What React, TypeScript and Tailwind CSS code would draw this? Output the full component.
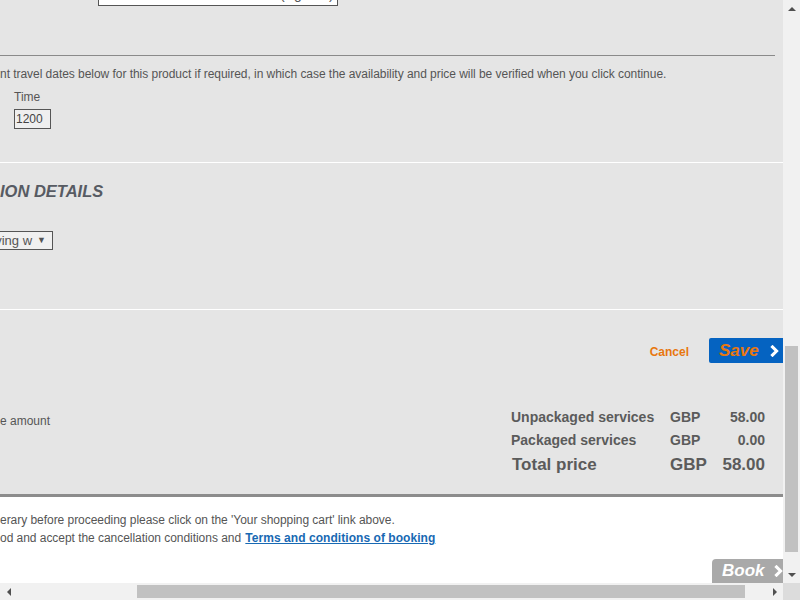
import React from "react";

const font = "font-['Liberation_Sans',Arial,sans-serif]";

function Chevron({ className }: { className?: string }) {
  return (
    <svg viewBox="0 0 10 14" className={className}>
      <path d="M2 1 L8 7 L2 13" fill="none" stroke="currentColor" strokeWidth="3.6" />
    </svg>
  );
}

function PriceRow({ label, amount, big }: { label: string; amount: string; big?: boolean }) {
  return (
    <div
      className={`grid grid-cols-[159px_50px_45px] items-center font-bold text-[#5b5b5b] ${
        big ? "text-[17px] h-[26px]" : "text-[14px] h-[23px]"
      }`}
    >
      <span className={big ? "pl-[1px]" : ""}>{label}</span>
      <span>GBP</span>
      <span className="text-right">{amount}</span>
    </div>
  );
}

export default function App() {
  return (
    <div className={`w-[800px] h-[600px] overflow-hidden flex flex-col ${font}`}>
      <div className="flex h-[583px]">
        {/* page content */}
        <div className="w-[783px] h-full overflow-hidden bg-[#e5e5e5] flex flex-col">
          <div className="h-[55px]">
            <div className="ml-[98px] -mt-[15px] w-[240px] h-[21px] border border-[#555] bg-white text-[14px] text-[#555] leading-[17px] pl-[6px] whitespace-nowrap overflow-hidden">
              Mr Loaded-Test Information (Age 20)
            </div>
          </div>
          <div className="h-px w-[775px] bg-[#8a8a8a]" />

          <div className="h-[106px] pt-[11px] text-[12px] text-[#555]">
            <p className="whitespace-nowrap leading-[14px] tracking-[-0.04px]">
              nt travel dates below for this product if required, in which case the availability and price will be
              verified when you click continue.
            </p>
            <p className="ml-[14px] mt-[9px] leading-[14px]">Time</p>
            <div className="ml-[14px] mt-[5px] w-[37px] h-[20px] border border-[#555] bg-[#efefef] leading-[18px] pl-[1px] text-[#444]">
              1200
            </div>
          </div>
          <div className="h-px bg-white" />

          <div className="h-[146px]">
            <h2 className="mt-[19px] text-[16.5px] font-bold italic text-[#575b63] leading-[18px] whitespace-nowrap">
              ION DETAILS
            </h2>
            <div className="mt-[31px] w-[53px] h-[19px] border border-[#555] border-l-0 bg-[#f0f0f0] flex items-center justify-end pr-[6px] gap-[5px] text-[13px] text-[#555] whitespace-nowrap overflow-hidden">
              <span>ying w</span>
              <span className="text-[9px] text-[#555]">▼</span>
            </div>
          </div>
          <div className="h-px bg-white" />

          <div className="h-[184px] flex flex-col">
            <div className="flex items-center justify-end mt-[28px] h-[25px]">
              <span className="text-[12px] font-bold text-[#e8770f] mr-[20px] mt-[3px]">Cancel</span>
              <div className="w-[74px] h-[25px] bg-[#0563c1] rounded-l-[2px] flex items-center pl-[10px]">
                <span className="text-[17px] font-bold italic text-[#e8770f]">Save</span>
                <Chevron className="w-[10px] h-[12px] ml-[10px] text-white" />
              </div>
            </div>
            <div className="flex justify-between mt-[43px]">
              <p className="text-[12px] text-[#555] mt-[6px]">e amount</p>
              <div className="mr-[18px]">
                <PriceRow label="Unpackaged services" amount="58.00" />
                <PriceRow label="Packaged services" amount="0.00" />
                <PriceRow label="Total price" amount="58.00" big />
              </div>
            </div>
          </div>
          <div className="h-[3px] bg-[#8c8c8c]" />

          <div className="flex-1 bg-white flex flex-col">
            <div className="pt-[14px] text-[12px] text-[#555] leading-[18px] whitespace-nowrap tracking-[-0.04px]">
              <p>erary before proceeding please click on the 'Your shopping cart' link above.</p>
              <p>
                od and accept the cancellation conditions and{" "}
                <a className="ml-[1px] font-bold text-[#1869b3] underline tracking-[0.05px]">
                  Terms and conditions of booking
                </a>
              </p>
            </div>
            <div className="mt-auto flex justify-end">
              <div className="w-[71px] h-[24px] bg-[#a9a9a9] rounded-tl-[4px] flex items-center pl-[10px]">
                <span className="text-[17px] font-bold italic text-white">Book</span>
                <Chevron className="w-[10px] h-[12px] ml-[8px] text-white" />
              </div>
            </div>
          </div>
        </div>

        {/* vertical scrollbar */}
        <div className="w-[17px] h-full bg-[#f1f1f1] flex flex-col items-center">
          <div className="h-[17px] flex items-center justify-center">
            <div className="w-0 h-0 border-x-[4px] border-x-transparent border-b-[4px] border-b-[#505050]" />
          </div>
          <div className="flex-1 w-full px-[2px] pt-[329px] pb-[14px]">
            <div className="h-full bg-[#c1c1c1]" />
          </div>
          <div className="h-[17px] flex items-center justify-center">
            <div className="w-0 h-0 border-x-[4px] border-x-transparent border-t-[4px] border-t-[#505050]" />
          </div>
        </div>
      </div>

      {/* horizontal scrollbar */}
      <div className="flex h-[17px]">
        <div className="w-[783px] bg-[#f1f1f1] flex items-center">
          <div className="w-[17px] h-full flex items-center justify-center">
            <div className="w-0 h-0 border-y-[4px] border-y-transparent border-r-[4px] border-r-[#505050]" />
          </div>
          <div className="flex-1 h-full py-[2px] pl-[120px] pr-[21px]">
            <div className="h-full bg-[#c1c1c1]" />
          </div>
          <div className="w-[17px] h-full flex items-center justify-center">
            <div className="w-0 h-0 border-y-[4px] border-y-transparent border-l-[4px] border-l-[#505050]" />
          </div>
        </div>
        <div className="w-[17px] bg-[#dcdcdc]" />
      </div>
    </div>
  );
}
